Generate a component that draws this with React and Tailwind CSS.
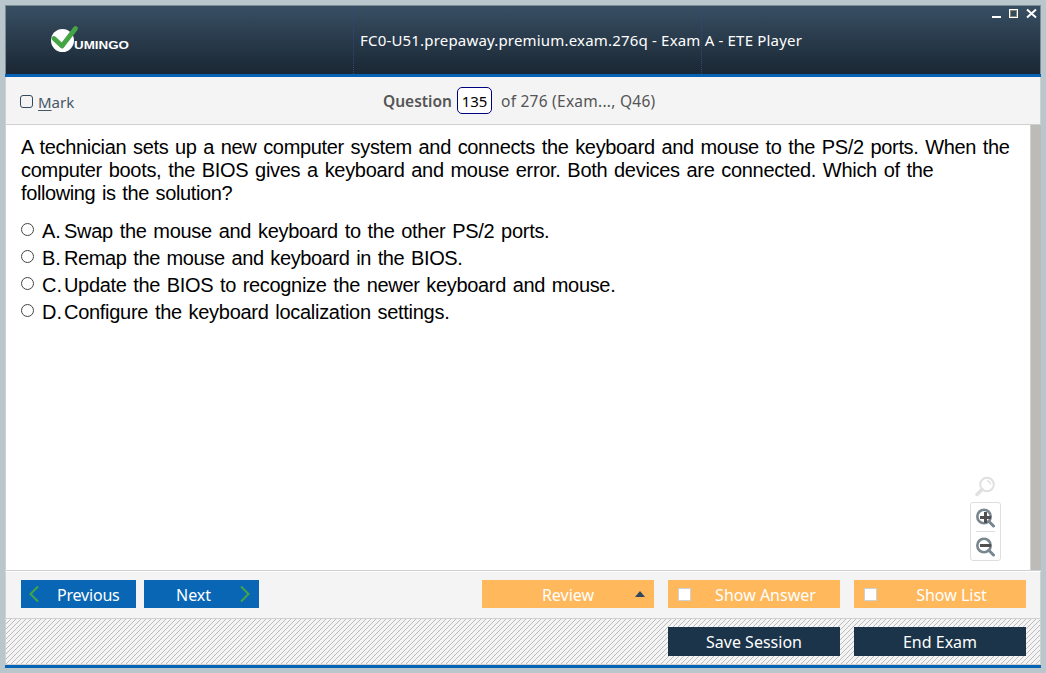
import React from "react";

const options = [
  ["A.", "Swap the mouse and keyboard to the other PS/2 ports.", "tracking-[-0.29px]"],
  ["B.", "Remap the mouse and keyboard in the BIOS.", "tracking-[-0.38px]"],
  ["C.", "Update the BIOS to recognize the newer keyboard and mouse.", "tracking-[-0.33px]"],
  ["D.", "Configure the keyboard localization settings.", "tracking-[-0.29px]"],
];

function Logo() {
  return (
    <svg width="82" height="30" viewBox="0 0 82 30" className="block">
      <circle cx="12.500" cy="15.500" r="11.500" fill="#fff" />
      <path d="M4 13.500 L12 21 L25.500 3.500" fill="none" stroke="#45a545" strokeWidth="4.800" strokeLinecap="round" strokeLinejoin="round" />
      <text x="24" y="23.500" textLength="55" lengthAdjust="spacingAndGlyphs" fill="#fff" fontSize="10" fontWeight="700" fontFamily="Liberation Sans, sans-serif">UMINGO</text>
    </svg>
  );
}

function WindowControls() {
  return (
    <svg width="46" height="12" viewBox="0 0 46 12" className="block" shapeRendering="crispEdges">
      <rect x="0" y="8" width="9" height="2" fill="#fff" />
      <rect x="17.500" y="1.500" width="8" height="8" fill="none" stroke="#fff" />
      <rect x="18.500" y="2.500" width="6" height="6" fill="none" stroke="#8c8378" />
      <path d="M35 1.500 L44 9.500 M44 1.500 L35 9.500" stroke="#fff" strokeWidth="2" shapeRendering="auto" />
    </svg>
  );
}

function Zoomer({ plus }) {
  return (
    <svg width="20" height="20" viewBox="0 0 20 20" className="block">
      <circle cx="8" cy="8.500" r="6.700" fill="none" stroke="#78868f" strokeWidth="2.600" />
      <path d="M13 13.500 L17.500 18" stroke="#78868f" strokeWidth="3" strokeLinecap="round" />
      <path d={plus ? "M4 9.500 H15 M9.500 4 V15" : "M4 8.500 H15"} stroke="#505050" strokeWidth="3" />
    </svg>
  );
}

function Hatch() {
  return (
    <svg width="100%" height="100%" className="absolute inset-0" shapeRendering="crispEdges">
      <defs>
        <pattern id="hatch" width="5" height="5" patternUnits="userSpaceOnUse">
          <path d="M4 0h1v1h-1z M3 1h1v1h-1z M2 2h1v1h-1z M1 3h1v1h-1z M0 4h1v1h-1z" fill="#bcbcbc" />
        </pattern>
      </defs>
      <rect width="100%" height="100%" fill="url(#hatch)" />
    </svg>
  );
}

export default function App() {
  return (
    <div className="h-[673px] w-[1046px] overflow-hidden bg-[#b9c6cc] pt-[5px] pl-[5px] font-['Noto_Sans',sans-serif]">
      <div className="flex h-[663px] w-[1036px] flex-col">
        <header className="relative flex h-[69px] shrink-0 items-center border border-b-0 border-[#7b8c92] bg-linear-to-b from-[#384f63] to-[#1a2734]">
          <div className="ml-[44px] w-[303px]"><Logo /></div>
          <div className="flex h-full w-[349px] items-center border-x border-dotted border-[#34447c] pl-[6px]">
            <h1 className="whitespace-nowrap text-[15px] tracking-[0.185px] text-white">FC0-U51.prepaway.premium.exam.276q - Exam A - ETE Player</h1>
          </div>
          <div className="absolute top-[2px] right-[2px]"><WindowControls /></div>
        </header>
        <div className="h-[3px] shrink-0 bg-[#0563b5]" />

        <div className="flex h-[48px] shrink-0 items-center border-x border-b border-[#d0d0d0] bg-[#f4f4f4] text-[15px] text-[#555]">
          <label className="flex w-[377px] items-center pl-[14px] pt-[2px] text-[#465766]">
            <span className="mr-[5px] size-[13px] rounded-[3px] border border-[#34495e]" />
            <span className="pt-[2px]"><span className="underline underline-offset-2">M</span>ark</span>
          </label>
          <span className="w-[74px] pt-[3px] text-[15.5px] font-semibold">Question</span>
          <span className="flex h-[27px] w-[35px] items-center justify-center rounded-[5px] border border-[#000080] bg-white pt-px text-black">135</span>
          <span className="ml-[9px] whitespace-nowrap pt-[3px] text-[15.5px] tracking-[0.25px]">of 276 (Exam..., Q46)</span>
        </div>

        <main className="flex h-[446px] shrink-0 border-b border-l border-[#d0d0d0] bg-white">
          <div className="relative w-[1025px] border-r border-[#d0d0d0] pl-[15px] pt-[11px] font-['Liberation_Sans',sans-serif] text-[20px] text-black [word-spacing:1.5px]">
            <div className="whitespace-nowrap leading-[23px]">
              <p className="tracking-[-0.34px]">A technician sets up a new computer system and connects the keyboard and mouse to the PS/2 ports. When the</p>
              <p className="tracking-[-0.302px]">computer boots, the BIOS gives a keyboard and mouse error. Both devices are connected. Which of the</p>
              <p className="tracking-[-0.39px]">following is the solution?</p>
            </div>
            <ul className="mt-[12px]">
              {options.map(([k, t, cls]) => (
                <li key={k} className="flex h-[27px] items-center whitespace-nowrap">
                  <span className="mb-[2px] size-[13px] rounded-full border border-[#444]" />
                  <span className="ml-[8px] w-[22px]">{k}</span>
                  <span className={cls}>{t}</span>
                </li>
              ))}
            </ul>
            <div className="absolute right-[29px] bottom-[9px] flex flex-col items-center">
              <svg width="22" height="22" viewBox="0 0 22 22" className="mr-[2px] mb-[4px] block">
                <circle cx="13" cy="8.500" r="6.800" fill="none" stroke="#e0e0e0" strokeWidth="2" />
                <path d="M13 5 a3.500 3.500 0 0 1 3.500 3.500" fill="none" stroke="#e0e0e0" strokeWidth="1.500" />
                <path d="M8 13.500 L3 18.500" stroke="#e0e0e0" strokeWidth="3.500" strokeLinecap="round" />
              </svg>
              <div className="flex h-[59px] w-[31px] flex-col items-center rounded-[3px] border border-[#dedede] pt-[5px]">
                <Zoomer plus />
                <div className="mt-[3px] mb-[5px] h-px w-[19px] bg-[#dedede]" />
                <Zoomer />
              </div>
            </div>
          </div>
          <div className="flex-1 bg-[#bcbbb7]" />
        </main>

        <div className="flex h-[48px] shrink-0 items-start border-x border-t border-b border-[#d0d0d0] border-t-white bg-[#f4f4f4] pt-[8px] pl-[15px] text-[16px] text-white">
          <button className="mr-2 flex h-[28px] w-[115px] items-center bg-[#0866b5]">
            <svg width="36" height="18" viewBox="0 0 36 18"><path d="M17 1.500 L9.500 9 L17 16.500" fill="none" stroke="#45a545" strokeWidth="2" /></svg>
            <span className="pt-[2px] tracking-[-0.2px]">Previous</span>
          </button>
          <button className="flex h-[28px] w-[115px] items-center bg-[#0866b5] pl-[32px]">
            <span className="w-[62px] pt-[2px] text-left">Next</span>
            <svg width="14" height="18" viewBox="0 0 14 18"><path d="M3 1.500 L10.500 9 L3 16.500" fill="none" stroke="#45a545" strokeWidth="2" /></svg>
          </button>
          <button className="relative ml-[223px] h-[28px] w-[172px] bg-[#ffb85c] pt-[2px]">
            Review
            <svg width="10" height="6" viewBox="0 0 10 6" className="absolute top-[11px] right-[9px]"><path d="M0 6 L5 0 L10 6Z" fill="#2d475c" /></svg>
          </button>
          <button className="ml-[14px] flex h-[28px] w-[172px] items-center bg-[#ffb85c] pl-[10px]">
            <span className="size-[13px] border border-[#d0d0d0] bg-white" />
            <span className="flex-1 pt-[2px] text-center">Show Answer</span>
          </button>
          <button className="ml-[14px] flex h-[28px] w-[172px] items-center bg-[#ffb85c] pl-[10px]">
            <span className="size-[13px] border border-[#d0d0d0] bg-white" />
            <span className="flex-1 pt-[2px] text-center">Show List</span>
          </button>
        </div>

        <footer className="relative flex h-[46px] shrink-0 justify-end gap-[14px] border-x border-b border-[#d0d0d0] bg-[#f4f4f4] pt-[8px] pr-[14px] text-[16px] text-white">
          <Hatch />
          <button className="relative h-[29px] w-[172px] bg-[#1b344a]">Save Session</button>
          <button className="relative h-[29px] w-[172px] bg-[#1b344a]">End Exam</button>
        </footer>
        <div className="h-[3px] shrink-0 bg-[#0563b5]" />
      </div>
    </div>
  );
}
